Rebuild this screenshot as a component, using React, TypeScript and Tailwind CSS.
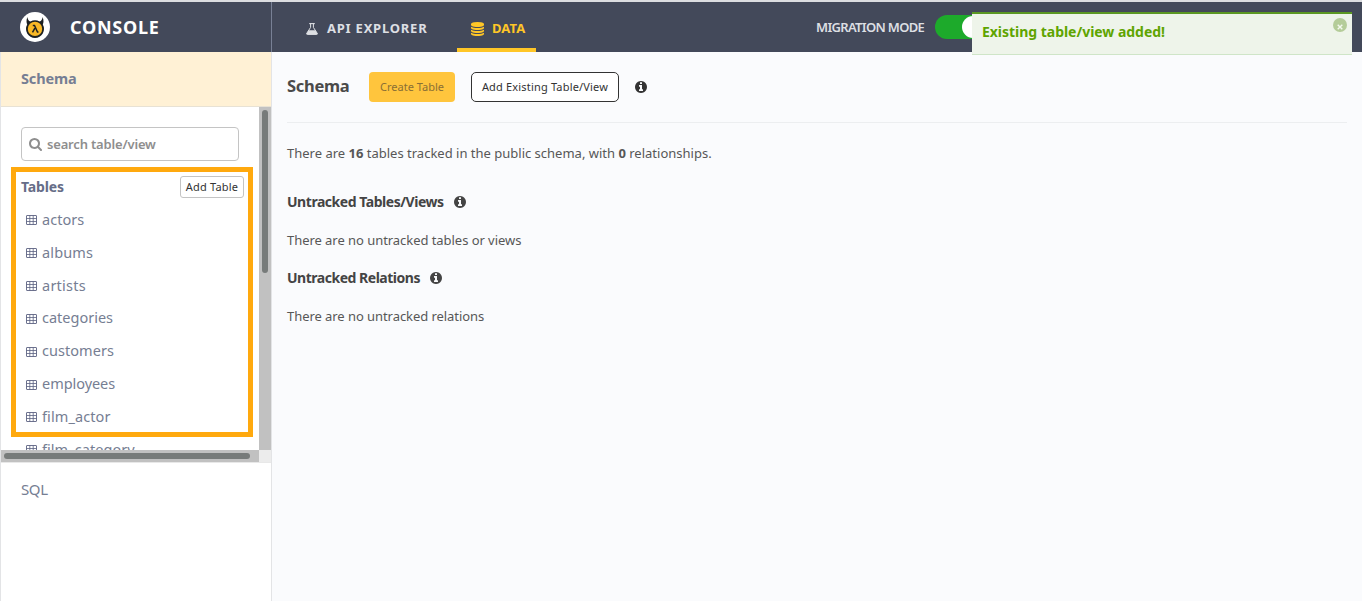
import React from "react";

type IconProps = { className?: string };

const InfoIcon = ({ className = "" }: IconProps) => (
  <svg className={"size-3 shrink-0 " + className} viewBox="0 128 1536 1536" fill="currentColor">
    <path d="M1024 1376v-160q0-14-9-23t-23-9h-96v-512q0-14-9-23t-23-9h-320q-14 0-23 9t-9 23v160q0 14 9 23t23 9h96v320h-96q-14 0-23 9t-9 23v160q0 14 9 23t23 9h448q14 0 23-9t9-23zm-128-896v-160q0-14-9-23t-23-9h-192q-14 0-23 9t-9 23v160q0 14 9 23t23 9h192q14 0 23-9t9-23zm640 416q0 209-103 385.5t-279.5 279.5-385.5 103-385.5-103-279.5-279.5-103-385.5 103-385.5 279.5-279.5 385.5-103 385.5 103 279.5 279.5 103 385.5z" />
  </svg>
);

const DatabaseIcon = ({ className = "" }: IconProps) => (
  <svg className={className} viewBox="0 0 1536 1792" preserveAspectRatio="none" fill="currentColor">
    <path d="M768 768q237 0 443-43t325-127v170q0 69-103 128t-280 93.5-385 34.5-385-34.5-280-93.5-103-128v-170q119 84 325 127t443 43zm0 768q237 0 443-43t325-127v170q0 69-103 128t-280 93.5-385 34.5-385-34.5-280-93.5-103-128v-170q119 84 325 127t443 43zm0-384q237 0 443-43t325-127v170q0 69-103 128t-280 93.5-385 34.5-385-34.5-280-93.5-103-128v-170q119 84 325 127t443 43zm0-1152q208 0 385 34.5t280 93.5 103 128v128q0 69-103 128t-280 93.5-385 34.5-385-34.5-280-93.5-103-128v-128q0-69 103-128t280-93.5 385-34.5z" />
  </svg>
);

const SearchIcon = ({ className = "" }: IconProps) => (
  <svg className={className} viewBox="0 128 1664 1664" fill="currentColor">
    <path d="M1152 832q0-185-131.5-316.5t-316.5-131.5-316.5 131.5-131.5 316.5 131.5 316.5 316.5 131.5 316.5-131.5 131.5-316.5zm512 832q0 52-38 90t-90 38q-54 0-90-38l-343-342q-179 124-399 124-143 0-273.5-55.5t-225-150-150-225-55.5-273.5 55.5-273.5 150-225 225-150 273.5-55.5 273.5 55.5 225 150 150 225 55.5 273.5q0 220-124 399l343 343q37 37 37 90z" />
  </svg>
);

const FlaskIcon = ({ className = "" }: IconProps) => (
  <svg className={className} viewBox="0 0 12 12" fill="none" stroke="currentColor">
    <path d="M3.2 .6h5.6" strokeWidth="1.1" />
    <path d="M4.6 .6v3.8L.9 10.1Q.1 11.4 1.5 11.4h9q1.4 0 .6-1.3L7.4 4.4V.6" strokeWidth="1" />
    <path d="M2.7 7.2h6.6l2.1 3.3q.2 1-.8 1H1.4q-1 0-.8-1z" fill="currentColor" stroke="none" />
  </svg>
);

const TableIcon = () => (
  <svg className="mt-px mr-[5px] h-[10px] w-[11px] shrink-0" viewBox="0 0 11 10" fill="none" stroke="#5c6282">
    <rect x=".5" y=".5" width="10" height="9" rx=".4" strokeWidth=".9" />
    <path d="M.5 3.5h10M.5 6.5h10M3.8 .5v9M7.2 .5v9" strokeWidth=".8" />
  </svg>
);

const Logo = () => (
  <svg className="size-[30px] shrink-0" viewBox="0 0 30 30">
    <circle cx="15" cy="15" r="15" fill="#fff" />
    <path
      d="M7.4 5C6.2 8 6.3 10.6 7.2 12.4A9 9 0 1 0 22.8 12.4C23.7 10.6 23.8 8 22.6 5C22.2 7.7 21.4 8.8 19.6 9.5A9 9 0 0 0 10.4 9.5C8.6 8.8 7.8 7.7 7.4 5Z"
      fill="#1c2022"
    />
    <circle cx="15" cy="16.9" r="7.2" fill="#f9b826" />
    <path d="M12.8 13.4h1.7l3 6.6h1M14.9 16.2l-2.4 4.2" stroke="#1c2022" strokeWidth="1.5" fill="none" />
  </svg>
);

const tables = [
  ["actors", "tracking-[0.05px]"],
  ["albums", "tracking-[0.15px]"],
  ["artists", "tracking-[0.25px]"],
  ["categories", "tracking-[0px]"],
  ["customers", "tracking-[0.05px]"],
  ["employees", "tracking-[-0.05px]"],
  ["film_actor", "tracking-[0.1px]"],
  ["film_category", "tracking-[0.05px]"],
];

function Header() {
  return (
    <header className="flex h-[52px] shrink-0 items-stretch border-t-2 border-[#dcdde0] bg-[#43495a] uppercase">
      <div className="flex w-[272px] shrink-0 items-center border-r border-[#788095] pl-5">
        <Logo />
        <span className="ml-5 text-[18px] font-bold tracking-[0.75px] text-white">Console</span>
      </div>
      <nav className="flex flex-1 pl-[18px] text-[13px] font-bold">
        <a className="flex items-center px-4 pt-[3px] text-[#dddfe3]">
          <FlaskIcon className="mr-[9px] size-3" />
          <span className="w-[101px] tracking-[0.77px]">API Explorer</span>
        </a>
        <a className="ml-[13px] flex w-[79px] items-center border-b-4 border-[#ffc627] pt-[7px] pl-[14px] text-[#ffc627]">
          <DatabaseIcon className="mr-2 h-[14px] w-[13px]" />
          <span className="tracking-[0.1px]">Data</span>
        </a>
      </nav>
      <div className="flex w-[546px] shrink-0 items-center text-[13px] font-semibold text-[#dddfe3]">
        <span className="w-[119px] pt-px tracking-[-0.68px]">Migration Mode</span>
        <span className="flex h-6 w-[50px] items-center justify-end rounded-full bg-[#1daa2b] p-px">
          <span className="size-[22px] rounded-full bg-white" />
        </span>
      </div>
    </header>
  );
}

function Sidebar() {
  return (
    <aside className="flex w-[272px] shrink-0 flex-col border-x border-[#e3e4e6] bg-white text-[#767e93]">
      <div className="flex h-[55px] shrink-0 items-center border-b border-[#e8e2d4] bg-[#fff1d5] pl-5 text-[14.5px] font-bold tracking-[-0.15px]">
        Schema
      </div>
      <div className="flex h-[343px] shrink-0">
        <div className="relative h-full w-[258px] overflow-hidden pt-5 pl-5">
          <div className="flex h-[34px] w-[218px] items-center rounded-[4px] border border-[#c4c4c4] pl-[7px] text-[#8e8e8e]">
            <SearchIcon className="mr-[5px] size-[13px]" />
            <span className="pt-0.5 text-[13px] font-semibold tracking-[-0.17px]">search table/view</span>
          </div>
          <div className="mt-[15px] flex h-[22px] w-[223px] items-center justify-between">
            <span className="pb-0.5 text-[14px] font-bold tracking-[-0.15px] text-[#666d87]">Tables</span>
            <button className="h-[22px] w-16 rounded-[3px] border border-[#c4c4c4] text-[11px] tracking-[0.2px] text-[#333]">Add Table</button>
          </div>
          <ul className="mt-[5.4px] pl-[5px]">
            {tables.map(([name, spacing]) => (
              <li key={name} className="flex h-[32.85px] items-center text-[14.5px]">
                <TableIcon />
                <span className={spacing}>{name}</span>
              </li>
            ))}
          </ul>
          <div className="absolute top-[60px] left-[10px] h-[270px] w-[242px] border-[5px] border-[#ffa90e]" />
        </div>
        <div className="w-3 bg-[#c1c1c1] pt-[3px] pl-[3px]">
          <div className="h-[163px] w-1.5 rounded-full bg-[#777b7a]" />
        </div>
      </div>
      <div className="flex h-3 shrink-0 bg-[#ececec]">
        <div className="w-[258px] bg-[#c1c1c1] pt-[3px] pl-[3px]">
          <div className="h-1.5 w-[246px] rounded-full bg-[#777b7a]" />
        </div>
      </div>
      <div className="flex h-[54px] items-center border-t border-[#e8e8e8] pl-5 text-[15px] tracking-[-0.4px]">SQL</div>
    </aside>
  );
}

function Content() {
  return (
    <main className="flex-1 bg-[#fafbfd] pr-[15px] pl-[15px] text-[13px] text-[#575757]">
      <div className="flex h-[71px] items-center border-b border-[#eceef0]">
        <h1 className="w-[82px] pb-0.5 text-[16.5px] font-bold tracking-[-0.3px] text-[#4a4a4a]">Schema</h1>
        <button className="h-[30px] w-[86px] rounded-[4px] bg-[#ffc53d] text-[11px] text-[#8a6f35]">Create Table</button>
        <button className="ml-4 h-[30px] w-[148px] rounded-[5px] border border-[#333] bg-white text-[11px] tracking-[0.18px] text-[#333]">
          Add Existing Table/View
        </button>
        <InfoIcon className="-mt-px ml-4 text-[#333]" />
      </div>
      <p className="mt-5 h-5 leading-5">
        There are <b>16</b> tables tracked in the public schema, with <b>0</b> relationships.
      </p>
      <h2 className="mt-[29px] flex h-5 items-center text-[14px] font-bold text-[#444]">
        <span className="pb-0.5 tracking-[-0.46px]">Untracked Tables/Views</span>
        <InfoIcon className="ml-[10px]" />
      </h2>
      <p className="mt-[18px] h-5 leading-5 tracking-[-0.05px]">There are no untracked tables or views</p>
      <h2 className="mt-[18px] flex h-5 items-center text-[14px] font-bold text-[#444]">
        <span className="pb-0.5 tracking-[-0.48px]">Untracked Relations</span>
        <InfoIcon className="ml-[10px]" />
      </h2>
      <p className="mt-[18px] h-5 leading-5 tracking-[-0.06px]">There are no untracked relations</p>
    </main>
  );
}

function Toast() {
  return (
    <div className="absolute top-3 left-[972px] flex h-[43px] w-[380px] justify-between border-t-2 border-b border-[#5b9823] border-b-[#cfe5c8] bg-[#eef4ea] pt-2 pr-[5px] pl-[10px]">
      <strong className="text-[14px] leading-5 font-bold tracking-[-0.03px] text-[#5ea400]">Existing table/view added!</strong>
      <span className="-mt-1 flex size-[14px] items-center justify-center rounded-full bg-[#b4cc99]">
        <svg className="mt-1 size-[6px]" viewBox="0 0 6 6" stroke="#f3f8ee" strokeWidth="1.4">
          <path d="M.7.7l4.6 4.6M5.3.7L.7 5.3" />
        </svg>
      </span>
    </div>
  );
}

export default function App() {
  return (
    <div className="relative flex h-[601px] w-[1362px] flex-col overflow-hidden font-['Noto_Sans',sans-serif] whitespace-nowrap">
      <Header />
      <div className="flex min-h-0 flex-1">
        <Sidebar />
        <Content />
      </div>
      <Toast />
    </div>
  );
}
